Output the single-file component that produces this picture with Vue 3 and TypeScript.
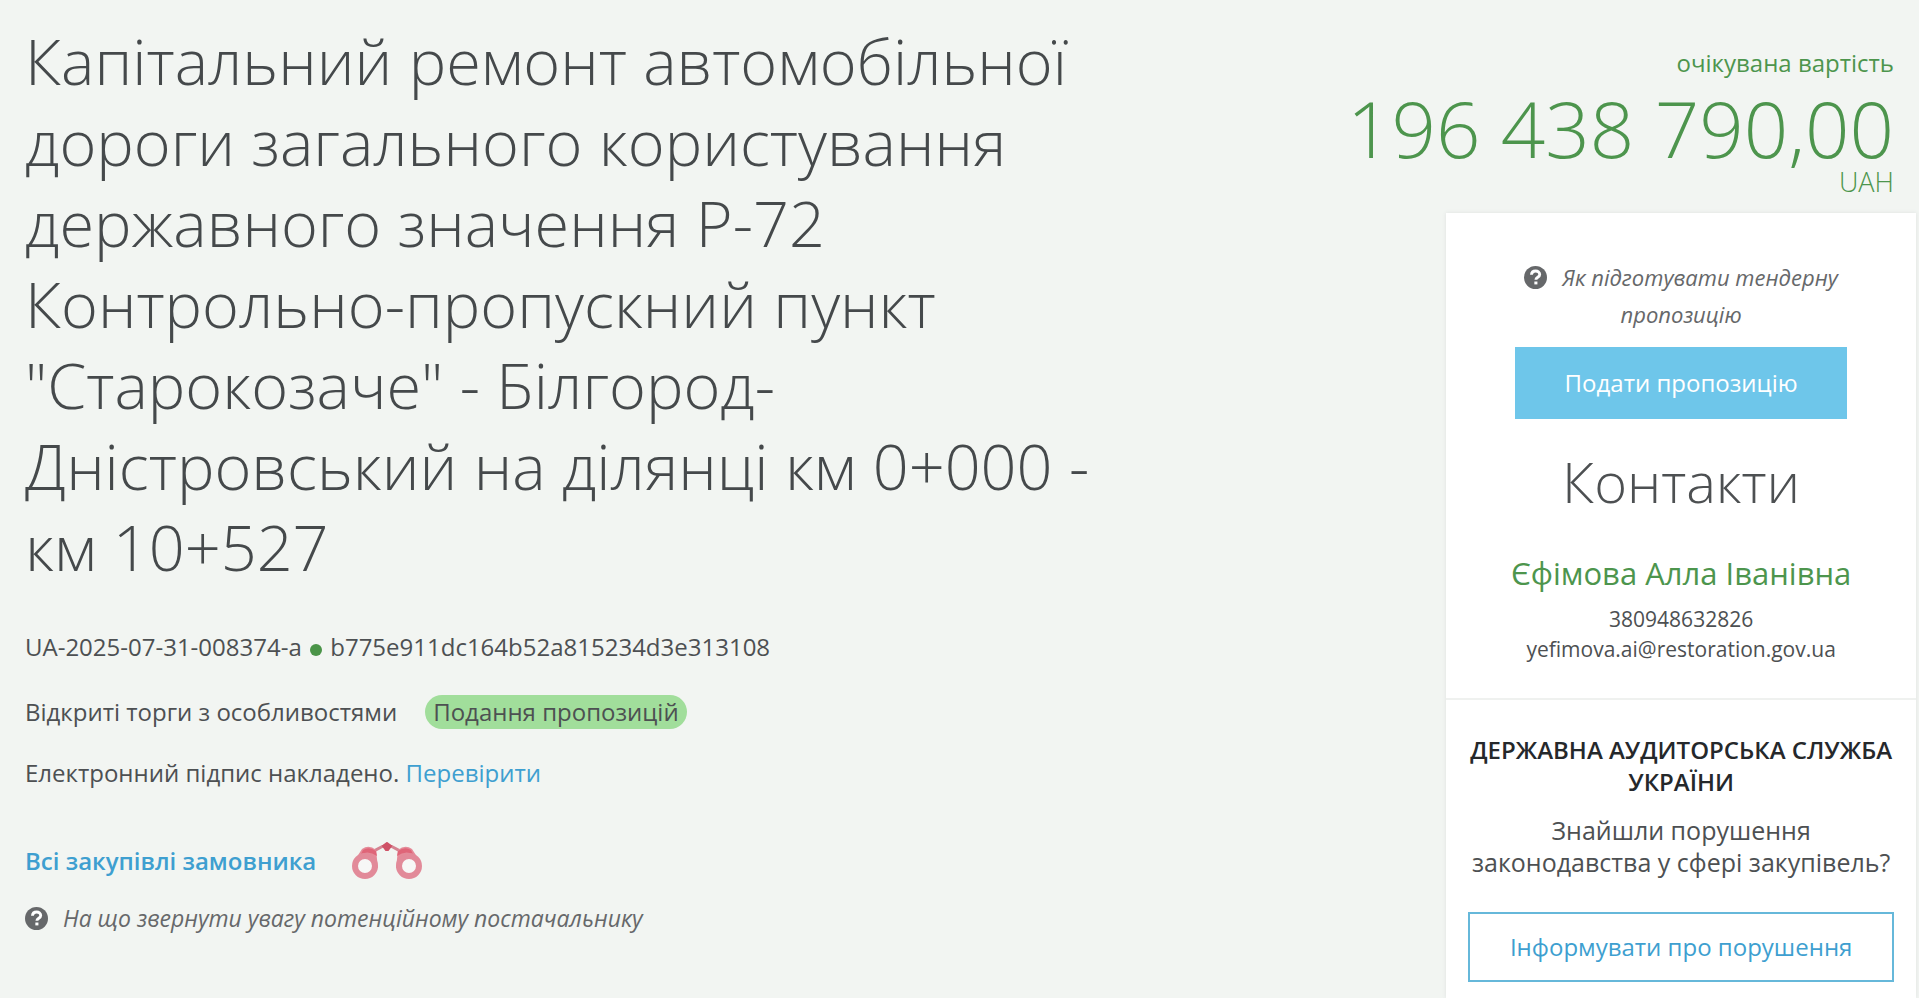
<script setup lang="ts">
interface Contact {
  name: string
  phone: string
  email: string
}

const title =
  'Капітальний ремонт автомобільної дороги загального користування державного значення Р-72 Контрольно-пропускний пункт "Старокозаче" - Білгород-Дністровський на ділянці км 0+000 - км 10+527'
const tenderId = 'UA-2025-07-31-008374-a'
const tenderHash = 'b775e911dc164b52a815234d3e313108'
const amount = '196 438 790,00'
const contact: Contact = {
  name: 'Єфімова Алла Іванівна',
  phone: '380948632826',
  email: 'yefimova.ai@restoration.gov.ua',
}
</script>

<template>
  <main class="tender">
    <section class="info">
      <h1 class="title">{{ title }}</h1>
      <p class="ids">
        {{ tenderId }} <span class="dot"></span> {{ tenderHash }}
      </p>
      <p class="kind">
        Відкриті торги з особливостями
        <span class="status">Подання пропозицій</span>
      </p>
      <p class="sign">
        Електронний підпис накладено. <a href="#sign">Перевірити</a>
      </p>
      <p class="buyer">
        <a href="#buyer" class="all">Всі закупівлі замовника</a>
        <svg class="binoculars" viewBox="0 0 72 38" aria-hidden="true">
          <path d="M22 9 C27 8 29 4 34 4 H38 C43 4 45 8 50 9" fill="none" stroke="#d58391" stroke-width="3" />
          <path d="M2 21 L11 7 Q18 2 25 8 L27 26 Z M70 21 L61 7 Q54 2 47 8 L45 26 Z" fill="#e58b99" />
          <path d="M12 8 Q18 4 25 9 L26 14 Q18 8 10 12 Z M60 8 Q54 4 47 9 L46 14 Q54 8 62 12 Z" fill="#df6578" />
          <path d="M36 1 L40 4 L37 8 H35 L32 4 Z" fill="#cf5267" stroke="#cf5267" stroke-width="2" />
          <circle cx="14" cy="24" r="10" fill="#f7f7f6" stroke="#e28a99" stroke-width="6" />
          <circle cx="58" cy="24" r="10" fill="#f7f7f6" stroke="#e28a99" stroke-width="6" />
        </svg>
      </p>
      <a href="#hint" class="hint">
        <svg class="question" viewBox="0 0 24 24" aria-hidden="true">
          <circle cx="12" cy="12" r="12" fill="#66686a" />
          <path d="M7.8 9.2 C8 3.8 16.4 4 16.4 8.8 C16.4 11.8 12.4 11.6 12.4 14.4" fill="none" stroke="#fff" stroke-width="3" />
          <rect x="10.8" y="16.2" width="3.2" height="3" fill="#fff" />
        </svg>
        <span>На що звернути увагу потенційному постачальнику</span>
      </a>
    </section>

    <aside class="side">
      <div class="price">
        <div>очікувана вартість</div>
        <div class="amount">{{ amount }}</div>
        <div class="currency">UAH</div>
      </div>
      <div class="card">
        <section class="block">
          <a href="#prepare" class="help">
            <svg class="question" viewBox="0 0 24 24" aria-hidden="true">
              <circle cx="12" cy="12" r="12" fill="#66686a" />
              <path d="M7.8 9.2 C8 3.8 16.4 4 16.4 8.8 C16.4 11.8 12.4 11.6 12.4 14.4" fill="none" stroke="#fff" stroke-width="3" />
              <rect x="10.8" y="16.2" width="3.2" height="3" fill="#fff" />
            </svg>
            <span>Як підготувати тендерну пропозицію</span>
          </a>
          <button type="button" class="submit">Подати пропозицію</button>
          <h2 class="contacts">Контакти</h2>
          <div class="name">{{ contact.name }}</div>
          <div class="detail">{{ contact.phone }}</div>
          <div class="detail">{{ contact.email }}</div>
        </section>
        <section class="block audit">
          <h3 class="agency">ДЕРЖАВНА АУДИТОРСЬКА СЛУЖБА УКРАЇНИ</h3>
          <p class="ask">Знайшли порушення законодавства у сфері закупівель?</p>
          <button type="button" class="report">Інформувати про порушення</button>
        </section>
      </div>
    </aside>
  </main>
</template>

<style>
body {
  background: #f2f5f2;
}
</style>

<style scoped>
.tender {
  display: flex;
  justify-content: space-between;
  min-height: 100vh;
  overflow: hidden;
  box-sizing: border-box;
  font-family: "Open Sans", "Noto Sans", sans-serif;
  font-size: 24px;
  line-height: 32px;
  color: #4d5052;
}
h1,
h2,
h3,
p {
  margin: 0;
}
a {
  color: #3e9fd0;
  text-decoration: none;
}
.info {
  width: 60%;
  box-sizing: border-box;
  padding: 20px 0 0 25px;
}
.title {
  font-size: 63px;
  line-height: 81px;
  font-weight: 300;
  color: #45494b;
}
.ids {
  margin-top: 44px;
}
.dot {
  display: inline-block;
  width: 12px;
  height: 12px;
  margin: 0 2px;
  border-radius: 50%;
  background: #4a9448;
}
.kind {
  display: flex;
  align-items: center;
  gap: 28px;
  margin-top: 32px;
}
.status {
  padding: 0 8px;
  border-radius: 17px;
  line-height: 34px;
  background: #a1de9b;
}
.sign {
  margin-top: 28px;
}
.buyer {
  display: flex;
  align-items: center;
  gap: 35px;
  margin-top: 53px;
}
.all {
  font-weight: 600;
}
.binoculars {
  width: 72px;
  height: 38px;
}
.question {
  width: 23px;
  height: 23px;
  flex: none;
}
.hint,
.help {
  font-style: italic;
  font-weight: 500;
  color: #66686a;
}
.hint {
  display: flex;
  align-items: center;
  gap: 15px;
  margin-top: 22px;
  font-size: 23px;
}
.side {
  display: flex;
  flex-direction: column;
  align-items: flex-end;
  width: 36%;
}
.price {
  padding: 47px 25px 0 0;
  text-align: right;
  color: #4d954d;
}
.amount {
  padding-top: 7px;
  font-size: 78px;
  line-height: 84px;
  font-weight: 300;
  white-space: nowrap;
}
.currency {
  font-size: 27px;
  line-height: 24px;
  font-weight: 300;
}
.card {
  flex: 1;
  width: 68%;
  margin: 19px 3px 0 0;
  background: #fff;
  box-shadow: 0 0 4px #dfe2e0;
  text-align: center;
}
.block {
  padding: 0 22px;
}
.help {
  display: block;
  padding: 46px 40px 0;
  font-size: 22px;
  line-height: 37px;
}
.help .question {
  margin-right: 15px;
  vertical-align: -3px;
}
button {
  display: block;
  font: inherit;
  cursor: pointer;
}
.submit {
  width: 78%;
  height: 72px;
  margin: 14px auto 0;
  border: 0;
  background: #6ec6ea;
  color: #fff;
  font-weight: 500;
}
.contacts {
  margin-top: 26px;
  font-size: 56px;
  line-height: 72px;
  font-weight: 300;
}
.name {
  margin-top: 36px;
  font-size: 31px;
  line-height: 40px;
  color: #4d954d;
}
.detail {
  font-size: 21px;
  line-height: 30px;
}
.name + .detail {
  margin-top: 11px;
}
.audit {
  margin-top: 34px;
  padding-top: 34px;
  border-top: 2px solid #eff1ef;
}
.agency {
  font-size: 24px;
  line-height: 32px;
  font-weight: 600;
  color: #25282b;
}
.ask {
  margin-top: 16px;
  font-size: 25px;
}
.report {
  width: 100%;
  height: 70px;
  margin-top: 34px;
  border: 2px solid #66b8da;
  background: #fff;
  color: #3e9fd0;
}
</style>
